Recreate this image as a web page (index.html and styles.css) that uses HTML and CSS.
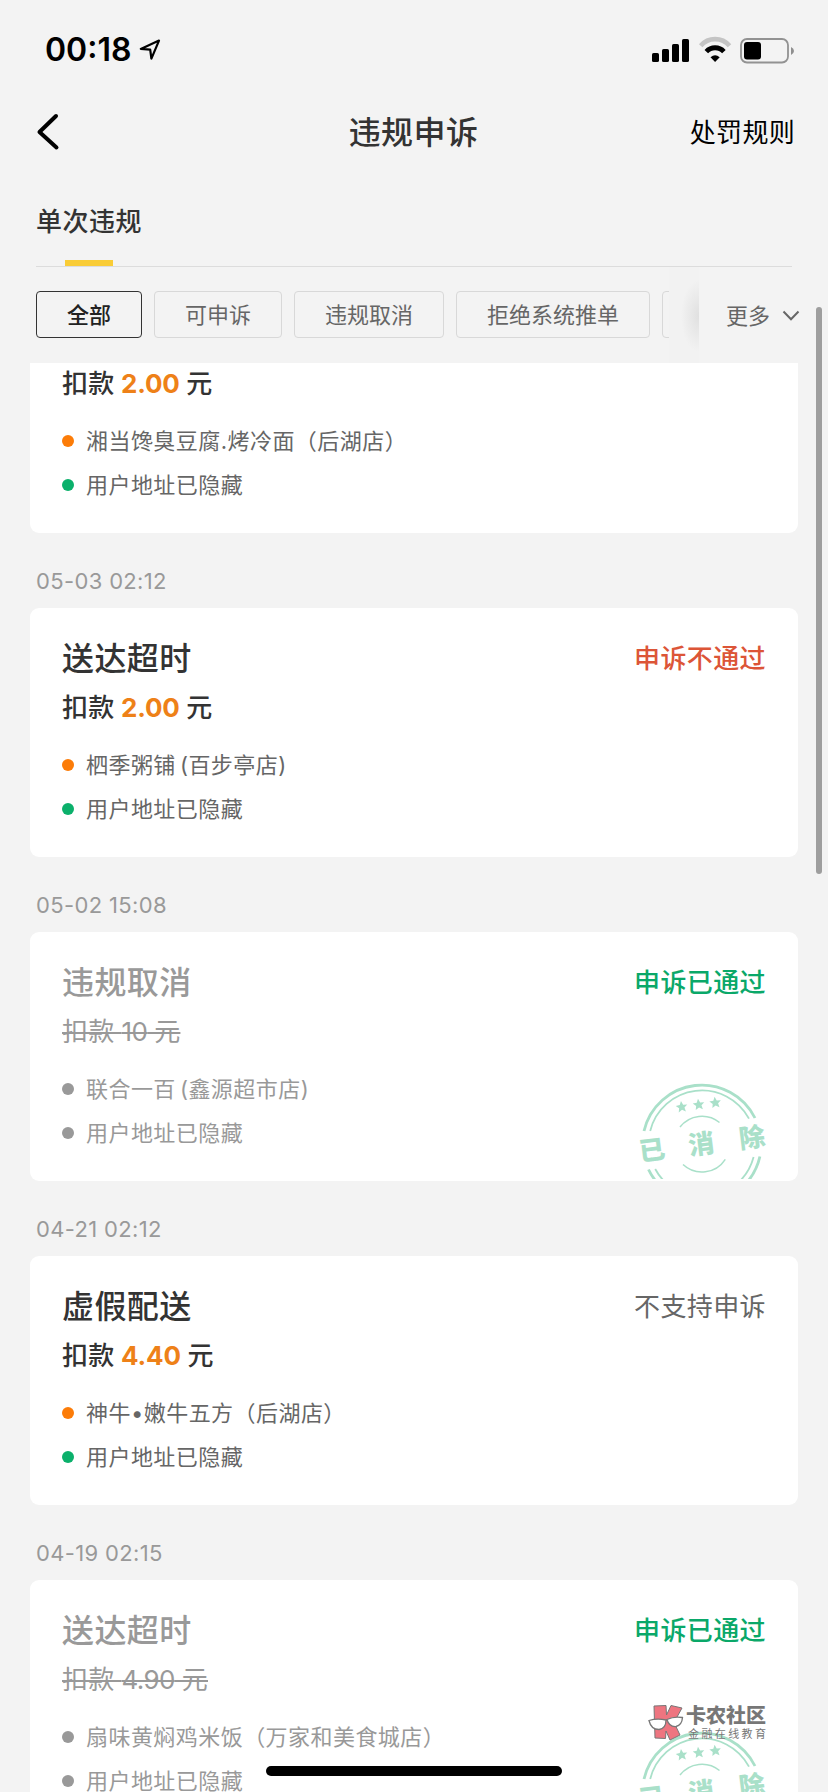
FILE: index.html
```html
<!DOCTYPE html>
<html lang="zh-CN">
<head>
  <meta charset="utf-8">
  <title>违规申诉</title>
  <link rel="stylesheet" href="styles.css">
</head>
<body>
  <svg width="0" height="0" class="defs">
    <defs>
      <path id="star" d="M0 -6L1.7 -2.1L5.8 -1.8L2.7 0.9L3.6 5L0 2.8L-3.6 5L-2.7 0.9L-5.8 -1.8L-1.7 -2.1Z"/>
      <g id="stamp">
        <g fill="none" stroke="#a9e0c9">
          <path stroke-width="2.8" d="M-58 -13A59.4 59.4 0 0 1 53 -26M57.9 12.5A59.4 59.4 0 0 1 -53.5 25.5"/>
          <path stroke-width="1.8" d="M-51.8 -13A53.3 53.3 0 0 1 47 -25.3M51.6 13A53.3 53.3 0 0 1 -46.8 25"/>
          <path stroke-width="1.5" d="M-22 -17A27.8 27.8 0 0 1 17.5 -21.5M23.3 15.3A27.8 27.8 0 0 1 -19 20.5"/>
        </g>
        <g fill="#a9e0c9">
          <use href="#star" transform="translate(-20.3 -37) rotate(-7)"/>
          <use href="#star" transform="translate(-3.3 -39.3) rotate(-7)"/>
          <use href="#star" transform="translate(13.3 -41.3) rotate(-7)"/>
          <g class="stamp-text">
            <text transform="translate(-50 6) rotate(-7)" y="9.5">已</text>
            <text transform="translate(-0.7 0) rotate(-7)" y="9.5">消</text>
            <text transform="translate(50 -6.5) rotate(-7)" y="9.5">除</text>
          </g>
        </g>
      </g>
    </defs>
  </svg>

  <div class="status-bar">
    <span class="time">00:18</span>
    <svg class="location" width="22" height="22" viewBox="0 0 22 22">
      <path d="M1.8 9.9L20 1.6L12.4 19.6L11.2 10.6Z" fill="none" stroke="#000" stroke-width="2.2" stroke-linejoin="round"/>
    </svg>
    <svg class="signals" width="144" height="28" viewBox="0 0 144 28">
      <rect x="2" y="17" width="7" height="9" rx="1.6"/>
      <rect x="12" y="13" width="7" height="13" rx="1.6"/>
      <rect x="22" y="8" width="7" height="18" rx="1.6"/>
      <rect x="32" y="3" width="7" height="23" rx="1.6"/>
      <path d="M50.7 9.7A19 19 0 0 1 79.5 9.7" fill="none" stroke="#c4c4c4" stroke-width="4.6"/>
      <path d="M56.3 15.6A12 12 0 0 1 73.9 15.6" fill="none" stroke="#000" stroke-width="4.8"/>
      <path d="M65.1 26L60.5 21.3Q65.1 17.4 69.7 21.3Z"/>
      <rect x="91" y="3" width="47" height="23.5" rx="6" fill="none" stroke="#929292" stroke-width="1.8"/>
      <rect x="94" y="6" width="17" height="17.5" rx="3"/>
      <path d="M141 11Q144 12.5 144 15T141 19Z" fill="#8f8f8f"/>
    </svg>
  </div>

  <div class="navbar">
    <svg class="back" width="24" height="38" viewBox="0 0 24 38">
      <path d="M20 3L3.5 19L20.5 34.5" fill="none" stroke="#000" stroke-width="4" stroke-linecap="round" stroke-linejoin="round"/>
    </svg>
    <h1>违规申诉</h1>
    <span class="rules">处罚规则</span>
  </div>

  <div class="tabs">
    <div class="tab">单次违规</div>
  </div>

  <div class="filters">
    <div class="chips">
      <div class="chip active">全部</div>
      <div class="chip">可申诉</div>
      <div class="chip">违规取消</div>
      <div class="chip">拒绝系统推单</div>
      <div class="chip"></div>
    </div>
    <div class="fade"></div>
    <div class="more">
      更多
      <svg width="18" height="12" viewBox="0 0 18 12">
        <path d="M1.5 1.5L9 9.2L16.5 1.5" fill="none" stroke="#666" stroke-width="2"/>
      </svg>
    </div>
  </div>

  <div class="list">
    <div class="card first">
      <div class="card-head">
        <h2>送达超时</h2>
        <span class="result failed">申诉不通过</span>
      </div>
      <div class="fine">扣款 <b>2.00</b> 元</div>
      <div class="row"><i class="dot shop"></i>湘当馋臭豆腐.烤冷面（后湖店）</div>
      <div class="row"><i class="dot user"></i>用户地址已隐藏</div>
    </div>

    <div class="date">05-03 02:12</div>
    <div class="card">
      <div class="card-head">
        <h2>送达超时</h2>
        <span class="result failed">申诉不通过</span>
      </div>
      <div class="fine">扣款 <b>2.00</b> 元</div>
      <div class="row"><i class="dot shop"></i>柶季粥铺 (百步亭店)</div>
      <div class="row"><i class="dot user"></i>用户地址已隐藏</div>
    </div>

    <div class="date">05-02 15:08</div>
    <div class="card done">
      <div class="card-head">
        <h2>违规取消</h2>
        <span class="result passed">申诉已通过</span>
      </div>
      <div class="fine">扣款 <b>10</b> 元</div>
      <div class="row"><i class="dot shop"></i>联合一百 (鑫源超市店)</div>
      <div class="row"><i class="dot user"></i>用户地址已隐藏</div>
      <svg class="stamp" width="132" height="101" viewBox="-66 -66 132 101"><use href="#stamp"/></svg>
    </div>

    <div class="date">04-21 02:12</div>
    <div class="card">
      <div class="card-head">
        <h2>虚假配送</h2>
        <span class="result">不支持申诉</span>
      </div>
      <div class="fine">扣款 <b>4.40</b> 元</div>
      <div class="row"><i class="dot shop"></i>神牛•嫩牛五方（后湖店）</div>
      <div class="row"><i class="dot user"></i>用户地址已隐藏</div>
    </div>

    <div class="date">04-19 02:15</div>
    <div class="card done">
      <div class="card-head">
        <h2>送达超时</h2>
        <span class="result passed">申诉已通过</span>
      </div>
      <div class="fine">扣款 <b>4.90</b> 元</div>
      <div class="row"><i class="dot shop"></i>扇味黄焖鸡米饭（万家和美食城店）</div>
      <div class="row"><i class="dot user"></i>用户地址已隐藏</div>
      <svg class="stamp" width="132" height="101" viewBox="-66 -66 132 101"><use href="#stamp"/></svg>
    </div>
  </div>

  <div class="watermark">
    <svg width="36" height="38" viewBox="0 0 36 38">
      <path d="M6 2L18 1.5L18.5 11L23 1.5L34 4L26 18.5L32 31L22 36L18 27L17.5 34.5L7 34Z" fill="#ee7580" stroke="#777" stroke-width="1"/>
      <path d="M1 16.5Q9 14 18 16Q18 24.5 11 25.5Q3 25.5 1 16.5ZM19 15.5Q26 12 34.5 13.5Q34 21 28 22.5Q21 23 19 15.5Z" fill="#fff" stroke="#777" stroke-width="1.3"/>
    </svg>
    <div>
      <div class="brand">卡农社区</div>
      <div class="slogan">金融在线教育</div>
    </div>
  </div>
  <div class="scrollbar"></div>
  <div class="home-indicator"></div>
</body>
</html>
```
FILE: styles.css
```css
* {
  box-sizing: border-box;
}
body {
  position: relative;
  display: flex;
  flex-direction: column;
  width: 828px;
  height: 1792px;
  margin: 0;
  overflow: hidden;
  background-color: #f3f3f3;
  color: #333;
  font-family: Inter, "Noto Sans CJK SC", sans-serif;
}
h1, h2 {
  margin: 0;
  font-size: 32px;
  font-weight: 500;
  letter-spacing: 0.4px;
}
.defs {
  position: absolute;
}

/* top bars */
.status-bar {
  display: flex;
  align-items: center;
  height: 88px;
  padding: 11px 34px 0 45px;
}
.time {
  color: #000;
  font-size: 32px;
  font-weight: 600;
}
.location {
  margin-left: 8px;
}
.signals {
  margin-left: auto;
}
.navbar {
  display: grid;
  grid-template-columns: 1fr auto 1fr;
  align-items: center;
  height: 88px;
  padding: 0 33px 4px 36px;
}
.navbar h1 {
  margin-right: 4px;
}
.back {
  margin-top: 4px;
}
.rules {
  justify-self: end;
  color: #000;
  font-size: 26px;
  letter-spacing: 0.3px;
}
.tabs {
  height: 91px;
  margin: 0 36px;
  border-bottom: 1px solid #dcdcdc;
}
.tab {
  display: flex;
  flex-direction: column;
  width: 106px;
  height: 90px;
  padding-top: 26px;
  font-size: 26px;
  font-weight: 500;
  line-height: 40px;
  letter-spacing: 0.5px;
  white-space: nowrap;
}
.tab::after {
  content: "";
  width: 48px;
  height: 6px;
  margin: auto 0 0 29px;
  background-color: #f9cc36;
}

/* filters */
.filters {
  display: flex;
  flex: none;
  height: 96px;
  color: #666;
  font-size: 22px;
}
.chips {
  display: flex;
  gap: 12px;
  width: 669px;
  padding: 24px 0 0 36px;
  overflow: hidden;
}
.chip {
  flex: none;
  height: 47px;
  padding: 0 30px;
  border: 1px solid #d8d8d8;
  border-radius: 4px;
  line-height: 46px;
}
.chip.active {
  border-color: #333;
  color: #222;
  font-weight: 500;
}
.fade {
  width: 30px;
  background: radial-gradient(ellipse 18px 36px at 100% 49px, #e0e0e0, #f2f2f2);
}
.more {
  display: flex;
  align-items: center;
  gap: 12px;
  height: 94px;
  padding-left: 27px;
}
.more svg {
  margin-top: 4px;
}

/* violation list */
.list {
  flex: 1;
  overflow: hidden;
  padding: 0 30px;
}
.card {
  position: relative;
  height: 249px;
  padding: 33px 32px 31px;
  border-radius: 9px;
  background-color: #fff;
}
.card.first {
  margin-top: -79px;
}
.card-head {
  display: flex;
  justify-content: space-between;
  height: 36px;
  line-height: 36px;
}
.result {
  color: #666;
  font-size: 26px;
  letter-spacing: 0.4px;
}
.failed {
  color: #dc5537;
  font-weight: 500;
}
.passed {
  color: #0aa869;
  font-weight: 500;
}
.fine {
  height: 34px;
  margin: 14px 0 18px;
  font-size: 26px;
  font-weight: 500;
  line-height: 34px;
  letter-spacing: 0.2px;
  word-spacing: -0.5px;
}
.fine b {
  color: #ee8118;
  font-weight: 700;
  letter-spacing: -0.2px;
}
.row {
  display: flex;
  align-items: center;
  height: 44px;
  padding-bottom: 4px;
  color: #666;
  font-size: 22px;
  letter-spacing: 0.45px;
  word-spacing: -2.5px;
  white-space: pre;
}
.dot {
  width: 12px;
  height: 12px;
  margin: 4px 12px 0 0;
  border-radius: 50%;
}
.shop {
  background-color: #fc7c08;
}
.user {
  background-color: #0bb06b;
}
.date {
  height: 75px;
  padding: 11px 6px 0;
  color: #999;
  font-size: 22px;
  line-height: 75px;
  letter-spacing: 0.35px;
}

/* resolved violations */
.done h2,
.done .fine,
.done .row {
  color: #999;
}
.done .fine,
.done .fine b {
  color: #999;
  font-weight: 400;
}
.done .fine {
  width: max-content;
  text-decoration: line-through;
  text-decoration-thickness: 2px;
}
.done .fine b {
  letter-spacing: -0.6px;
}
.done .dot {
  background-color: #999;
}
.stamp {
  position: absolute;
  right: 30px;
  top: 146px;
}
.stamp-text {
  font-size: 26px;
  font-weight: 900;
  text-anchor: middle;
}

/* overlays */
.watermark {
  position: absolute;
  left: 648px;
  top: 1704px;
  display: flex;
  gap: 2px;
  color: #777;
}
.brand {
  font-size: 20px;
  font-weight: 900;
  line-height: 24px;
}
.slogan {
  margin-left: 2px;
  font-size: 11px;
  line-height: 12px;
  letter-spacing: 2.4px;
  white-space: nowrap;
}
.scrollbar {
  position: absolute;
  left: 816px;
  top: 307px;
  width: 6px;
  height: 567px;
  border-radius: 3px;
  background-color: #9e9e9e;
}
.home-indicator {
  position: absolute;
  left: 266px;
  top: 1766px;
  width: 296px;
  height: 10px;
  border-radius: 5px;
  background-color: #000;
}
```
